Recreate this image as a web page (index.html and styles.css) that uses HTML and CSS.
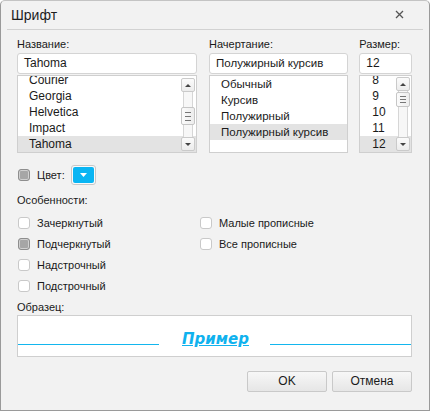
FILE: index.html
```html
<!DOCTYPE html>
<html lang="ru">
<head>
<meta charset="utf-8">
<title>Шрифт</title>
<link rel="stylesheet" href="styles.css">
</head>
<body>
<div class="dialog">
  <div class="titlebar">
    <span class="title">Шрифт</span>
    <svg class="close" width="9" height="9" viewBox="0 0 9 9"><path d="M1 1L8 8M8 1L1 8" stroke="#555" stroke-width="1.3" fill="none"/></svg>
  </div>
  <div class="body">
    <div class="fontrow">
      <div class="col col-name">
        <div class="label">Название:</div>
        <div class="input">Tahoma</div>
        <div class="list">
          <div class="items scrolled">
            <div class="item">Courier</div>
            <div class="item">Georgia</div>
            <div class="item">Helvetica</div>
            <div class="item">Impact</div>
            <div class="item sel">Tahoma</div>
          </div>
          <div class="scrollbar">
            <div class="sbtn up"></div>
            <div class="track"><div class="thumb t-name"></div></div>
            <div class="sbtn down"></div>
          </div>
        </div>
      </div>
      <div class="col col-style">
        <div class="label">Начертание:</div>
        <div class="input">Полужирный курсив</div>
        <div class="list">
          <div class="items">
            <div class="item">Обычный</div>
            <div class="item">Курсив</div>
            <div class="item">Полужирный</div>
            <div class="item sel">Полужирный курсив</div>
          </div>
        </div>
      </div>
      <div class="col col-size">
        <div class="label">Размер:</div>
        <div class="input">12</div>
        <div class="list">
          <div class="items scrolled">
            <div class="item">8</div>
            <div class="item">9</div>
            <div class="item">10</div>
            <div class="item">11</div>
            <div class="item sel">12</div>
          </div>
          <div class="scrollbar">
            <div class="sbtn up"></div>
            <div class="track"><div class="thumb t-size"></div></div>
            <div class="sbtn down"></div>
          </div>
        </div>
      </div>
    </div>

    <div class="colorrow">
      <span class="check on"></span>
      <span class="clabel">Цвет:</span>
      <span class="colorbtn"><span class="swatch"><svg width="7" height="4" viewBox="0 0 7 4"><path d="M0 0H7L3.5 4Z" fill="#fff"/></svg></span></span>
    </div>

    <div class="label section">Особенности:</div>
    <div class="features">
      <div class="frow"><span class="check"></span><span class="clabel">Зачеркнутый</span></div>
      <div class="frow"><span class="check"></span><span class="clabel">Малые прописные</span></div>
      <div class="frow"><span class="check on"></span><span class="clabel">Подчеркнутый</span></div>
      <div class="frow"><span class="check"></span><span class="clabel">Все прописные</span></div>
      <div class="frow"><span class="check"></span><span class="clabel">Надстрочный</span></div>
      <div class="frow"></div>
      <div class="frow"><span class="check"></span><span class="clabel">Подстрочный</span></div>
      <div class="frow"></div>
    </div>

    <div class="label sample-label">Образец:</div>
    <div class="sample">
      <span class="sline"></span>
      <span class="stext">Пример</span>
      <span class="sline"></span>
    </div>

    <div class="buttons">
      <span class="btn">OK</span>
      <span class="btn">Отмена</span>
    </div>
  </div>
</div>
</body>
</html>
```

FILE: styles.css
```css
* { box-sizing: border-box; }
html, body { margin: 0; padding: 0; background: #ffffff; }
body {
  font-family: "Liberation Sans", Arial, sans-serif;
  font-size: 11px;
  color: #1a1a1a;
}
.dialog {
  width: 430px;
  height: 411px;
  background: #f2f2f2;
  border: 1px solid #9a9a9a;
  border-top-color: #c4c4c4;
  border-radius: 5px 5px 0 0;
  display: flex;
  flex-direction: column;
}
.titlebar {
  height: 29px;
  margin: 0 6px;
  border-bottom: 1px solid #d2d2d2;
  display: flex;
  align-items: center;
  justify-content: space-between;
  padding: 0 19px 1px 4px;
}
.title {
  font-size: 14px;
  color: #1e1e1e;
}
.close { display: block; }

.body {
  padding: 7px 17px 0 16px;
  display: flex;
  flex-direction: column;
}
.label {
  line-height: 14px;
  height: 14px;
  color: #1a1a1a;
}
.fontrow {
  display: flex;
  gap: 12px;
}
.col { display: flex; flex-direction: column; }
.col-name { width: 181px; }
.col-style { width: 140px; }
.col-size { width: 53px; margin-left: -1px; }
.col .label { margin-bottom: 2px; }
.input {
  height: 21px;
  background: #fff;
  border: 1px solid #d4d4d4;
  border-radius: 3px;
  padding: 0 6px;
  line-height: 19px;
  font-size: 12px;
}
.col-style .input { font-size: 11.5px; }
.list {
  position: relative;
  margin-top: 1px;
  height: 78px;
  background: #fff;
  border: 1px solid #cfcfcf;
  overflow: hidden;
}
.items.scrolled { margin-top: -4px; }
.item {
  height: 16px;
  line-height: 16px;
  padding-left: 11px;
  font-size: 12px;
  white-space: nowrap;
}
.col-style .item { padding-left: 11px; font-size: 11.5px; }
.col-size .item { padding-left: 12px; }
.item.sel { background: #e3e3e3; }

.scrollbar {
  position: absolute;
  top: 2px;
  right: 1px;
  bottom: 1px;
  width: 14px;
  display: flex;
  flex-direction: column;
}
.col-size .scrollbar { top: 1px; }
.sbtn {
  height: 14px;
  flex: none;
  border: 1px solid #cacaca;
  border-radius: 2px;
  background: linear-gradient(#fbfbfb, #ececec);
  display: flex;
  align-items: center;
  justify-content: center;
}
.sbtn::after {
  content: "";
  border-left: 3px solid transparent;
  border-right: 3px solid transparent;
}
.sbtn.up::after { border-bottom: 3px solid #444; }
.sbtn.down::after { border-top: 3px solid #444; }
.track {
  flex: 1;
  margin: 0 2px;
  border-left: 1px solid #d6d6d6;
  border-right: 1px solid #d6d6d6;
  background: #f7f7f7;
  position: relative;
  display: flex;
  flex-direction: column;
}
.thumb {
  margin: 0 -3px;
  height: 18px;
  border: 1px solid #c6c6c6;
  border-radius: 2px;
  background-image:
    linear-gradient(#777, #777),
    linear-gradient(#777, #777),
    linear-gradient(#777, #777),
    linear-gradient(90deg, #fbfbfb, #ededed);
  background-size: 6px 1px, 6px 1px, 6px 1px, 100% 100%;
  background-position: 3px 4px, 3px 8px, 3px 12px, 0 0;
  background-repeat: no-repeat;
}
.t-name { margin-top: 15px; }
.t-size { margin-top: 1px; height: 15px; background-position: 3px 3px, 3px 6px, 3px 9px, 0 0; }

.colorrow {
  margin-top: 12px;
  height: 20px;
  display: flex;
  align-items: center;
  padding-left: 1px;
}
.check {
  width: 12px;
  height: 12px;
  flex: none;
  border: 1px solid #c9c9c9;
  border-radius: 3px;
  background: #fff;
}
.check.on {
  border-color: #8e8e8e;
  background: #a6a6a6;
  box-shadow: inset 0 0 0 1px #d0d0d0;
}
.clabel {
  margin-left: 7px;
  line-height: 14px;
  white-space: nowrap;
}
.colorbtn {
  margin-left: 6px;
  width: 25px;
  height: 20px;
  border: 1px solid #c8c8c8;
  border-radius: 3px;
  background: #fafafa;
  padding: 1px;
  display: flex;
}
.swatch {
  flex: 1;
  background: #0ab5f3;
  border-radius: 2px;
  display: flex;
  align-items: center;
  justify-content: center;
}
.swatch svg { display: block; }

.section { margin-top: 8px; }
.features {
  margin-top: 5px;
  display: grid;
  grid-template-columns: 182px 1fr;
}
.frow {
  height: 21px;
  display: flex;
  align-items: center;
  padding-left: 1px;
}
.sample-label { margin-top: 4px; }
.sample {
  margin-top: 1px;
  height: 42px;
  background: #fff;
  border: 1px solid #cfcfcf;
  display: flex;
  align-items: flex-end;
  padding-bottom: 11px;
}
.sline {
  width: 141px;
  height: 1px;
  flex: none;
  background: #13b6ee;
}
.stext {
  flex: 1;
  text-align: center;
  font-family: "DejaVu Sans", Verdana, sans-serif;
  font-weight: bold;
  font-style: italic;
  font-size: 15px;
  line-height: 16px;
  color: #10b2ee;
  text-decoration: underline;
  text-underline-offset: 1px;
  margin-bottom: -2px;
  padding-left: 2px;
}
.buttons {
  margin-top: 14px;
  display: flex;
  justify-content: flex-end;
  gap: 5px;
}
.btn {
  width: 80px;
  height: 21px;
  border: 1px solid #c9c9c9;
  border-radius: 2px;
  background: linear-gradient(#f7f7f7, #e6e6e6);
  text-align: center;
  line-height: 19px;
  font-size: 12px;
  color: #1a1a1a;
}
```
